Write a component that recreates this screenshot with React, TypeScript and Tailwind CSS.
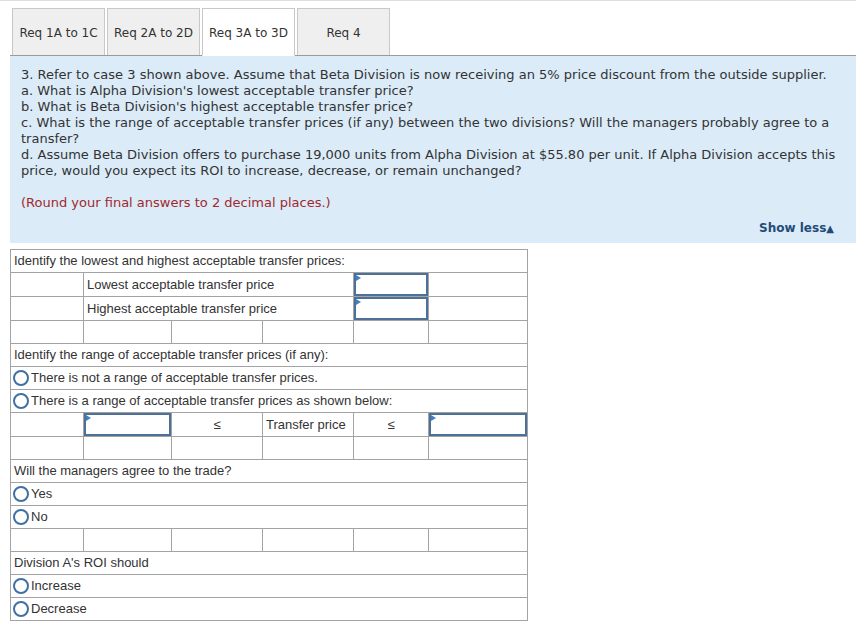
import React from 'react';

const tabs = ['Req 1A to 1C', 'Req 2A to 2D', 'Req 3A to 3D', 'Req 4'];
const active = 2;

function Radio({ label }: { label: string }) {
  return (
    <div className="flex items-center h-full pl-[2px]">
      <span className="w-[16px] h-[16px] rounded-full border-2 border-[#3f6fa3] bg-white mr-[2px] shrink-0"></span>
      <span>{label}</span>
    </div>
  );
}

function AnswerBox() {
  return (
    <div className="relative h-[23px] border-2 border-[#4d7099] bg-white">
      <span className="absolute left-0 top-0 w-0 h-0 border-y-[3px] border-y-transparent border-l-[5px] border-l-[#3f7fc4]"></span>
    </div>
  );
}

function EmptyRow() {
  return (
    <tr>
      <td className="border border-[#a3a3a3] h-[23px]"></td>
      <td className="border border-[#a3a3a3]"></td>
      <td className="border border-[#a3a3a3]"></td>
      <td className="border border-[#a3a3a3]"></td>
      <td className="border border-[#a3a3a3]"></td>
      <td className="border border-[#a3a3a3]"></td>
    </tr>
  );
}

function FullRow({ children }: { children: React.ReactNode }) {
  return (
    <tr>
      <td colSpan={6} className="border border-[#a3a3a3] h-[23px] p-0 px-[3px]">
        {children}
      </td>
    </tr>
  );
}

export default function App() {
  const cell = 'border border-[#a3a3a3] h-[23px]';
  return (
    <div className="w-[856px] h-[627px] bg-white border-t border-[#dddddd] text-[#333]">
      {/* tabs */}
      <div className="ml-[10px] mt-[7px] flex gap-[2px] pl-[2px] border-b border-[#9a9a9a] h-[48px]">
        {tabs.map((t, i) => (
          <div
            key={t}
            className={
              'w-[93px] flex items-center justify-center pt-[2px] border border-[#c8c8c8] text-[12px] ' +
              (i === active ? 'bg-white border-b-white border-[#aaaaaa] -mb-px h-[48px]' : 'bg-[#efefef] border-b-0 h-[47px]')
            }
            style={{ fontFamily: '"DejaVu Sans", Verdana, sans-serif' }}
          >
            {t}
          </div>
        ))}
      </div>

      {/* question */}
      <div
        className="ml-[10px] h-[187px] bg-[#dbebf8] pl-[11px] pr-[6px] pt-[11px] pb-[6px] flex flex-col text-[13px] leading-[16px]"
        style={{ fontFamily: '"DejaVu Sans", Verdana, sans-serif' }}
      >
        <p>3. Refer to case 3 shown above. Assume that Beta Division is now receiving an 5% price discount from the outside supplier.</p>
        <p>a. What is Alpha Division's lowest acceptable transfer price?</p>
        <p>b. What is Beta Division's highest acceptable transfer price?</p>
        <p>c. What is the range of acceptable transfer prices (if any) between the two divisions? Will the managers probably agree to a transfer?</p>
        <p>d. Assume Beta Division offers to purchase 19,000 units from Alpha Division at $55.80 per unit. If Alpha Division accepts this price, would you expect its ROI to increase, decrease, or remain unchanged?</p>
        <p className="mt-[16px] text-[#a3282e]">(Round your final answers to 2 decimal places.)</p>
        <div className="mt-auto flex justify-end pr-[16px]">
          <span className="text-[12px] font-bold text-[#244b78]">Show less<span className="text-[10px]">▲</span></span>
        </div>
      </div>

      {/* answer table */}
      <table
        className="ml-[10px] mt-[6px] border-collapse table-fixed w-[517px] text-[13px] text-[#333]"
        style={{ fontFamily: '"Liberation Sans", Arial, sans-serif' }}
      >
        <colgroup>
          <col className="w-[73px]" />
          <col className="w-[88px]" />
          <col className="w-[91px]" />
          <col className="w-[91px]" />
          <col className="w-[75px]" />
          <col className="w-[99px]" />
        </colgroup>
        <tbody>
          <FullRow>Identify the lowest and highest acceptable transfer prices:</FullRow>
          <tr>
            <td className={cell}></td>
            <td colSpan={3} className={cell + ' px-[3px]'}>Lowest acceptable transfer price</td>
            <td className={cell + ' p-0'}><AnswerBox /></td>
            <td className={cell}></td>
          </tr>
          <tr>
            <td className={cell}></td>
            <td colSpan={3} className={cell + ' px-[3px]'}>Highest acceptable transfer price</td>
            <td className={cell + ' p-0'}><AnswerBox /></td>
            <td className={cell}></td>
          </tr>
          <EmptyRow />
          <FullRow>Identify the range of acceptable transfer prices (if any):</FullRow>
          <tr>
            <td colSpan={6} className={cell + ' p-0'}><Radio label="There is not a range of acceptable transfer prices." /></td>
          </tr>
          <tr>
            <td colSpan={6} className={cell + ' p-0'}><Radio label="There is a range of acceptable transfer prices as shown below:" /></td>
          </tr>
          <tr>
            <td className={cell}></td>
            <td className={cell + ' p-0'}><AnswerBox /></td>
            <td className={cell + ' text-center'}>≤</td>
            <td className={cell + ' px-[3px]'}>Transfer price</td>
            <td className={cell + ' text-center'}>≤</td>
            <td className={cell + ' p-0'}><AnswerBox /></td>
          </tr>
          <EmptyRow />
          <FullRow>Will the managers agree to the trade?</FullRow>
          <tr>
            <td colSpan={6} className={cell + ' p-0'}><Radio label="Yes" /></td>
          </tr>
          <tr>
            <td colSpan={6} className={cell + ' p-0'}><Radio label="No" /></td>
          </tr>
          <EmptyRow />
          <FullRow>Division A's ROI should</FullRow>
          <tr>
            <td colSpan={6} className={cell + ' p-0'}><Radio label="Increase" /></td>
          </tr>
          <tr>
            <td colSpan={6} className={cell + ' p-0'}><Radio label="Decrease" /></td>
          </tr>
        </tbody>
      </table>
    </div>
  );
}
